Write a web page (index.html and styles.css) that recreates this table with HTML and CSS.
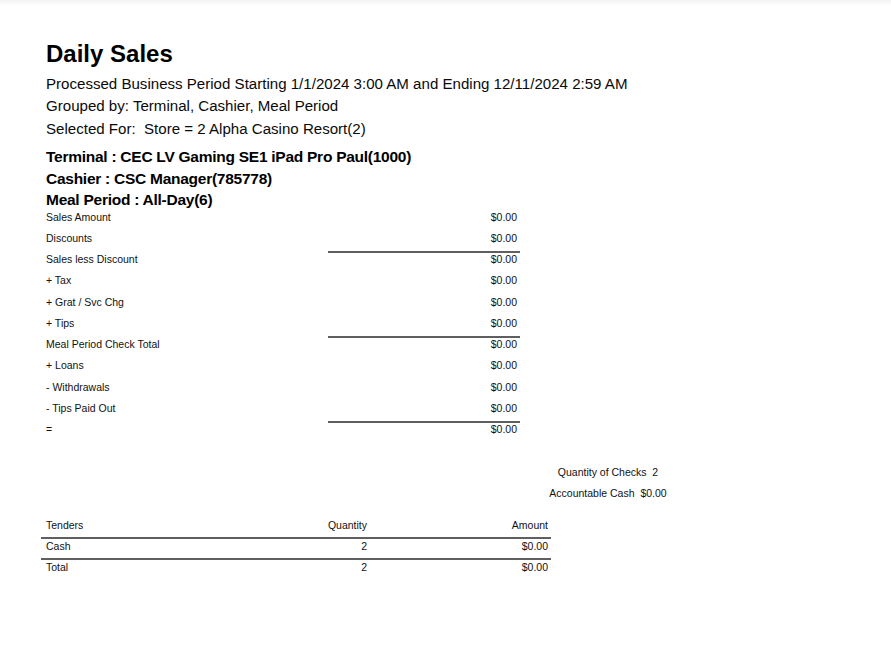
FILE: index.html
```html
<!DOCTYPE html>
<html>
<head>
<meta charset="utf-8">
<link rel="stylesheet" href="styles.css">
</head>
<body>
<div class="page">
  <h1 class="title">Daily Sales</h1>
  <div class="sub sub-first">Processed Business Period Starting 1/1/2024 3:00 AM and Ending 12/11/2024 2:59 AM</div>
  <div class="sub">Grouped by: Terminal, Cashier, Meal Period</div>
  <div class="sub sub-sel">Selected For:&nbsp; Store = 2 Alpha Casino Resort(2)</div>

  <div class="groups">
    <div class="group">Terminal : CEC LV Gaming SE1 iPad Pro Paul(1000)</div>
    <div class="group">Cashier : CSC Manager(785778)</div>
    <div class="group">Meal Period : All-Day(6)</div>
  </div>

  <div class="summary">
    <div class="lbl">Sales Amount</div><div class="val">$0.00</div>
    <div class="lbl">Discounts</div><div class="val">$0.00</div>
    <div class="lbl">Sales less Discount</div><div class="val ruled">$0.00</div>
    <div class="lbl">+ Tax</div><div class="val">$0.00</div>
    <div class="lbl">+ Grat / Svc Chg</div><div class="val">$0.00</div>
    <div class="lbl">+ Tips</div><div class="val">$0.00</div>
    <div class="lbl">Meal Period Check Total</div><div class="val ruled">$0.00</div>
    <div class="lbl">+ Loans</div><div class="val">$0.00</div>
    <div class="lbl">- Withdrawals</div><div class="val">$0.00</div>
    <div class="lbl">- Tips Paid Out</div><div class="val">$0.00</div>
    <div class="lbl">=</div><div class="val ruled">$0.00</div>
  </div>

  <div class="totals">
    <div class="tline">Quantity of Checks&nbsp; 2</div>
    <div class="tline">Accountable Cash&nbsp; $0.00</div>
  </div>

  <div class="tenders">
    <div class="tc tc-name">Tenders</div><div class="tc tc-num">Quantity</div><div class="tc tc-num">Amount</div>
    <div class="tc tc-name ruled">Cash</div><div class="tc tc-num ruled">2</div><div class="tc tc-num ruled">$0.00</div>
    <div class="tc tc-name ruled">Total</div><div class="tc tc-num ruled">2</div><div class="tc tc-num ruled">$0.00</div>
  </div>
</div>
</body>
</html>
```

FILE: styles.css
```css
html, body {
  margin: 0;
  padding: 0;
}
body {
  background: linear-gradient(#f3f3f3, #ffffff 6px) no-repeat;
  background-color: #ffffff;
  color: #000;
  font-family: "Liberation Sans", Arial, sans-serif;
  width: 891px;
  height: 646px;
  overflow: hidden;
}
.page {
  padding: 40px 0 0 46px;
}
.title {
  margin: 0;
  font-size: 24px;
  line-height: 28px;
  font-weight: bold;
}
.sub {
  font-size: 15.08px;
  line-height: 22px;
  color: #0a0a0a;
}
.sub-first {
  margin-top: 5px;
}
.sub-sel {
  margin-top: 1px;
}
.groups {
  margin-top: 6px;
}
.group {
  font-size: 15.5px;
  line-height: 21.7px;
  font-weight: bold;
  letter-spacing: -0.26px;
}
.summary {
  display: grid;
  grid-template-columns: 282px 192px;
  margin-top: -2.5px;
  font-size: 10.5px;
  color: #111;
}
.summary .lbl,
.summary .val {
  border-top: 2px solid transparent;
  line-height: 12px;
  padding-bottom: 7.25px;
}
.summary .val {
  text-align: right;
  padding-right: 3px;
}
.summary .val.ruled {
  border-top-color: #5f5f5f;
}
.totals {
  margin-top: 19.5px;
  width: 204px;
  margin-left: 460px;
  text-align: center;
  font-size: 10.5px;
  color: #111;
}
.tline {
  line-height: 21px;
}
.tenders {
  margin-top: 12px;
  margin-left: -5px;
  display: grid;
  grid-template-columns: 224px 105px 181px;
  font-size: 10.5px;
  color: #111;
}
.tc {
  border-top: 2px solid transparent;
  line-height: 14px;
  padding-bottom: 5px;
}
.tc-name {
  padding-left: 5px;
}
.tc-num {
  text-align: right;
  padding-right: 3px;
}
.tc.ruled {
  border-top-color: #5f5f5f;
}
```
